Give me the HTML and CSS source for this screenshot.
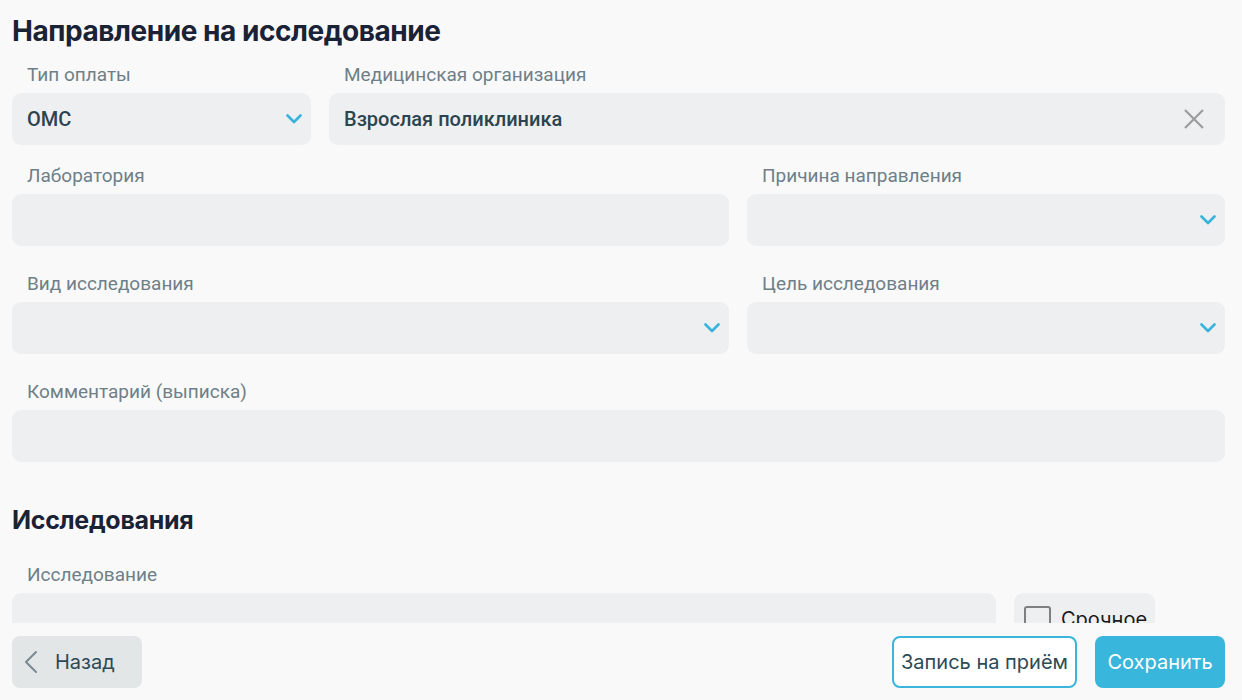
FILE: index.html
```html
<!DOCTYPE html>
<html lang="ru">
<head>
<meta charset="utf-8">
<title>Направление на исследование</title>
<link rel="stylesheet" href="styles.css">
</head>
<body>
<div class="page">
  <div class="content">
    <h1 class="title">Направление на исследование</h1>

    <div class="row row-first cols-a">
      <div class="field-group">
        <div class="label">Тип оплаты</div>
        <div class="field">
          <span class="value">ОМС</span>
          <svg class="chev" width="16" height="10" viewBox="0 0 16 10"><path d="M1.5 1.5 L8 8 L14.5 1.5" fill="none" stroke="#38b4dc" stroke-width="2.6" stroke-linecap="round" stroke-linejoin="round"/></svg>
        </div>
      </div>
      <div class="field-group">
        <div class="label">Медицинская организация</div>
        <div class="field">
          <span class="value">Взрослая поликлиника</span>
          <svg class="close" width="20" height="20" viewBox="0 0 20 20"><path d="M1 1 L19 19 M19 1 L1 19" fill="none" stroke="#9a9c9e" stroke-width="2.2"/></svg>
        </div>
      </div>
    </div>

    <div class="row cols-b">
      <div class="field-group">
        <div class="label">Лаборатория</div>
        <div class="field"></div>
      </div>
      <div class="field-group">
        <div class="label">Причина направления</div>
        <div class="field">
          <svg class="chev" width="16" height="10" viewBox="0 0 16 10"><path d="M1.5 1.5 L8 8 L14.5 1.5" fill="none" stroke="#38b4dc" stroke-width="2.6" stroke-linecap="round" stroke-linejoin="round"/></svg>
        </div>
      </div>
    </div>

    <div class="row cols-b">
      <div class="field-group">
        <div class="label">Вид исследования</div>
        <div class="field">
          <svg class="chev" width="16" height="10" viewBox="0 0 16 10"><path d="M1.5 1.5 L8 8 L14.5 1.5" fill="none" stroke="#38b4dc" stroke-width="2.6" stroke-linecap="round" stroke-linejoin="round"/></svg>
        </div>
      </div>
      <div class="field-group">
        <div class="label">Цель исследования</div>
        <div class="field">
          <svg class="chev" width="16" height="10" viewBox="0 0 16 10"><path d="M1.5 1.5 L8 8 L14.5 1.5" fill="none" stroke="#38b4dc" stroke-width="2.6" stroke-linecap="round" stroke-linejoin="round"/></svg>
        </div>
      </div>
    </div>

    <div class="row">
      <div class="field-group">
        <div class="label">Комментарий (выписка)</div>
        <div class="field"></div>
      </div>
    </div>

    <h2 class="subtitle">Исследования</h2>

    <div class="row cols-c">
      <div class="field-group">
        <div class="label">Исследование</div>
        <div class="field"></div>
      </div>
      <div class="field-group">
        <div class="label">&nbsp;</div>
        <div class="check-box">
          <span class="checkbox"></span>
          <span class="check-text">Срочное</span>
        </div>
      </div>
    </div>
  </div>

  <div class="footer">
    <button class="btn btn-back">
      <svg width="14" height="24" viewBox="0 0 14 24"><path d="M12 2 L2 12 L12 22" fill="none" stroke="#7b8a90" stroke-width="2" stroke-linecap="round" stroke-linejoin="round"/></svg>
      <span>Назад</span>
    </button>
    <div class="footer-right">
      <button class="btn btn-outline">Запись на приём</button>
      <button class="btn btn-primary">Сохранить</button>
    </div>
  </div>
</div>
</body>
</html>
```

FILE: styles.css
```css
* { box-sizing: border-box; }

html, body {
  margin: 0;
  padding: 0;
  background: #f9f9f9;
}

body {
  font-family: Roboto, "Noto Sans", sans-serif;
  width: 1242px;
  height: 700px;
  overflow: hidden;
}

.page {
  height: 700px;
  display: flex;
  flex-direction: column;
}

.content {
  flex: 0 0 623px;
  overflow: hidden;
  padding: 13px 17px 0 12px;
}

.title {
  margin: 0 0 16px 0;
  font-family: Inter, "Noto Sans", sans-serif;
  font-weight: 700;
  font-size: 28px;
  line-height: 36px;
  color: #1a2236;
  letter-spacing: -0.45px;
}

.subtitle {
  margin: 43px 0 30px 0;
  font-family: Inter, "Noto Sans", sans-serif;
  font-weight: 700;
  font-size: 25px;
  line-height: 30px;
  color: #1a2236;
  letter-spacing: -0.3px;
}

.row {
  display: grid;
  grid-template-columns: 1fr;
  column-gap: 18px;
  margin-bottom: 28px;
}

.row-first { margin-bottom: 21px; }

.cols-a { grid-template-columns: 299px 1fr; }
.cols-b { grid-template-columns: 1fr 478px; }
.cols-c { grid-template-columns: 984px 141px; }

.label {
  padding-left: 15px;
  margin-bottom: 8px;
  font-size: 19px;
  line-height: 20px;
  color: #6e7f88;
  white-space: nowrap;
}

.field {
  height: 52px;
  background: #eeeff1;
  border-radius: 9px;
  display: flex;
  align-items: center;
  padding: 0 15px;
}

.value {
  flex: 1;
  font-size: 20px;
  font-weight: 500;
  color: #2b4450;
}

.chev {
  margin-left: auto;
  margin-right: -6px;
  flex: none;
}

.close {
  margin-left: auto;
  margin-right: 6px;
  flex: none;
}

.check-box {
  height: 52px;
  background: #eeeff1;
  border-radius: 9px;
  display: flex;
  align-items: center;
  padding: 0 10px;
  gap: 10px;
}

.checkbox {
  width: 27px;
  height: 27px;
  border: 2.5px solid #7f7f7f;
  border-radius: 3px;
  flex: none;
}

.check-text {
  font-family: Inter, Roboto, sans-serif;
  font-size: 20px;
  color: #1b1b1b;
}

.footer {
  flex: 1;
  display: flex;
  justify-content: space-between;
  align-items: flex-start;
  padding: 13px 17px 0 12px;
}

.footer-right {
  display: flex;
  gap: 18px;
}

.btn {
  height: 52px;
  border-radius: 8px;
  border: none;
  font-family: Inter, Roboto, sans-serif;
  font-size: 20px;
  cursor: pointer;
  display: flex;
  align-items: center;
}

.btn-back {
  width: 130px;
  background: #e2e6e7;
  color: #2d4a55;
  padding: 0 12px;
  gap: 17px;
}

.btn-outline {
  width: 185px;
  background: #ffffff;
  border: 2px solid #3ab6dd;
  color: #2d4a55;
  justify-content: center;
  padding: 0;
}

.btn-primary {
  width: 130px;
  background: #38b6dc;
  color: #ffffff;
  justify-content: center;
  padding: 0;
}
```
